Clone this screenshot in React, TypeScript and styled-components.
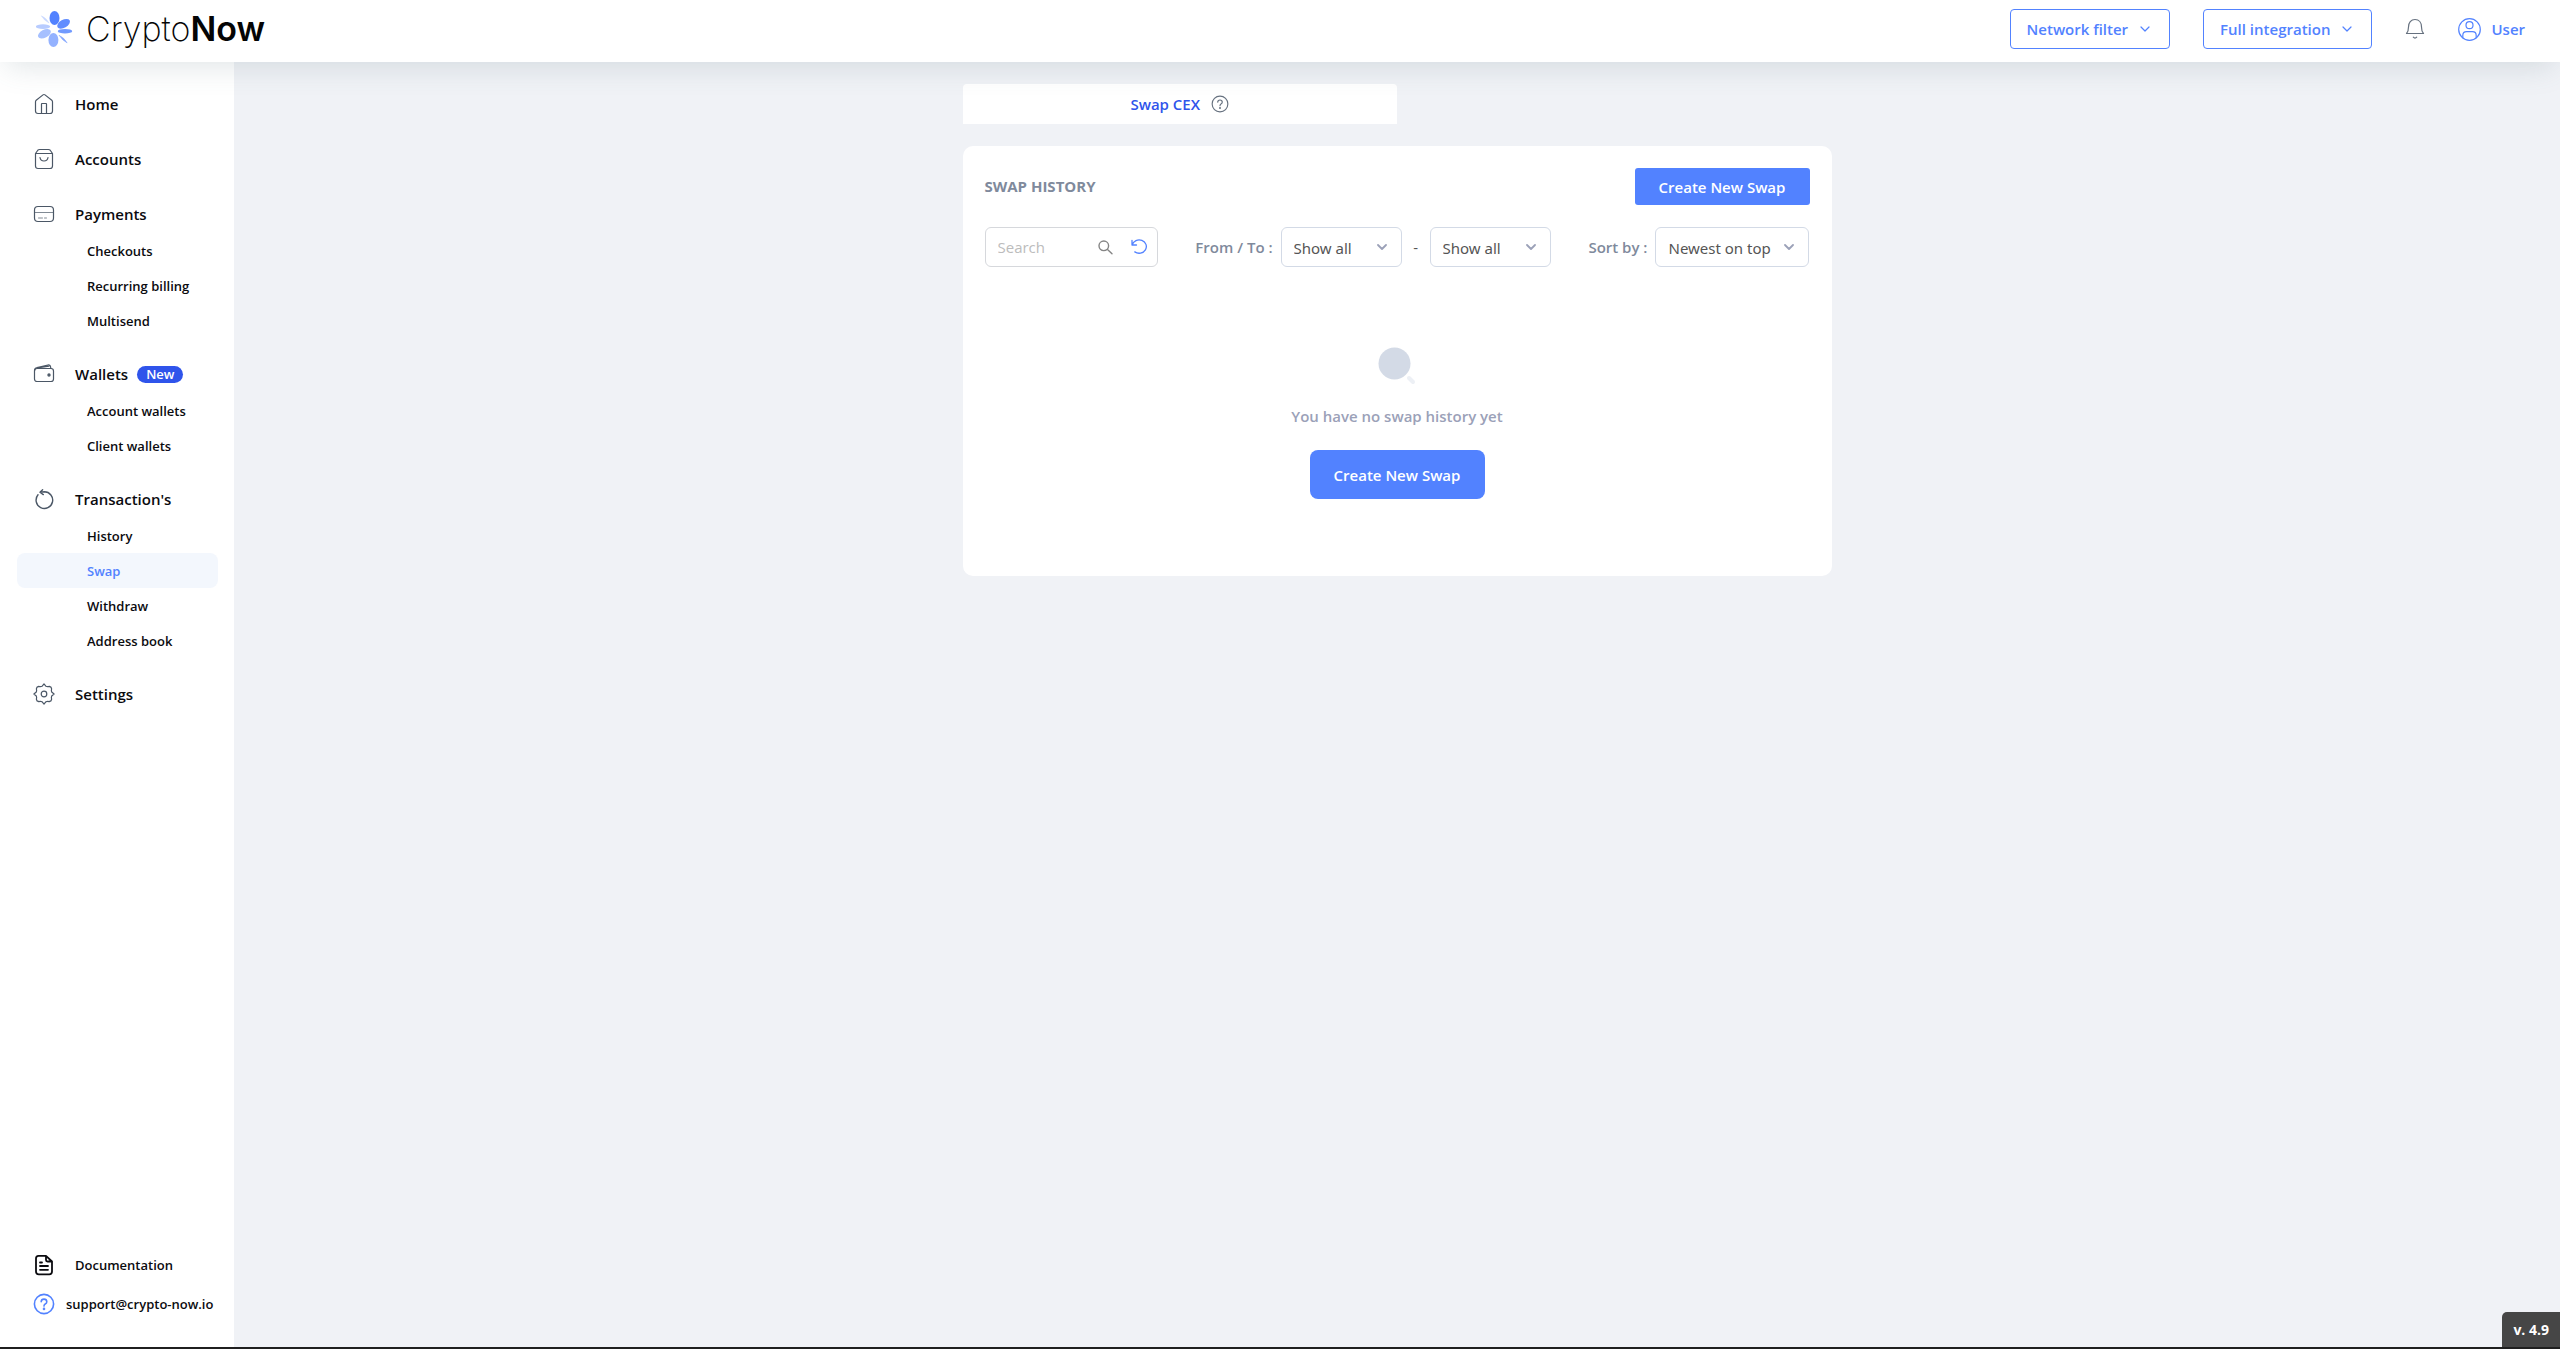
import React from 'react';
import styled, { createGlobalStyle } from 'styled-components';

const GlobalStyle = createGlobalStyle`
  *, *::before, *::after { box-sizing: border-box; }
  body { margin: 0; background: #f0f2f6; font-family: "Open Sans", "Noto Sans", sans-serif; font-size: 15px; color: #0b0b0f; }
  button, input, select { font: inherit; }
  button { cursor: pointer; }
  svg { display: block; flex: none; }
  ul { list-style: none; margin: 0; padding: 0; }
`;

const Page = styled.div`
  display: flex;
  flex-direction: column;
  min-height: 100vh;
  border-bottom: 2px solid #1f1f1f;
`;

const Header = styled.header`
  position: relative;
  z-index: 2;
  display: flex;
  align-items: center;
  justify-content: space-between;
  height: 62px;
  padding: 0 35px 4px 36px;
  background: #fff;
  box-shadow: 0 10px 30px -6px rgba(80, 105, 115, 0.18);
`;

const Brand = styled.a`
  display: flex;
  align-items: center;
  gap: 13px;
  color: #050505;
  text-decoration: none;
  font-family: Inter, Lato, sans-serif;
  font-size: 34px;
  line-height: 40px;
  font-weight: 200;
  b { font-weight: 600; }
`;

const HeaderActions = styled.div`
  display: flex;
  align-items: center;
`;

const OutlineButton = styled.button`
  display: flex;
  align-items: center;
  gap: 12px;
  height: 40px;
  margin-right: 33px;
  padding: 0 19px 0 16px;
  border: 1px solid #5282ff;
  border-radius: 4px;
  background: #fff;
  color: #5282ff;
  font-weight: 600;
`;

const IconButton = styled.button`
  display: flex;
  margin-right: 33px;
  padding: 0;
  border: 0;
  background: none;
`;

const UserButton = styled.button`
  display: flex;
  align-items: center;
  gap: 10px;
  padding: 0;
  border: 0;
  background: none;
  color: #5282ff;
  font-weight: 600;
`;

const Body = styled.div`
  display: flex;
  flex: 1;
`;

const Sidebar = styled.aside`
  display: flex;
  flex-direction: column;
  justify-content: space-between;
  width: 234px;
  padding: 23px 16px 24px 17px;
  background: #fff;
  font-weight: 600;
`;

const NavList = styled.ul`
  display: flex;
  flex-direction: column;
  gap: 17px;
`;

const NavLink = styled.a`
  display: flex;
  align-items: center;
  gap: 20px;
  height: 38px;
  padding-left: 16px;
  color: inherit;
  text-decoration: none;
`;

const NavLabel = styled.span`
  display: flex;
  align-items: center;
  gap: 9px;
`;

const SubLink = styled.a<{ $active?: boolean }>`
  display: flex;
  align-items: center;
  height: 35px;
  padding-left: 70px;
  border-radius: 8px;
  font-size: 13px;
  text-decoration: none;
  color: ${(p) => (p.$active ? '#5282ff' : 'inherit')};
  background: ${(p) => (p.$active ? '#f3f7fd' : 'transparent')};
`;

const Pill = styled.span`
  padding: 0 9px;
  border-radius: 9px;
  background: #2f54eb;
  color: #fff;
  font-size: 13px;
  line-height: 17px;
`;

const HelpLink = styled.a<{ $gap: number }>`
  display: flex;
  align-items: center;
  gap: ${(p) => p.$gap}px;
  height: 39px;
  padding-left: 16px;
  color: inherit;
  font-size: 13px;
  text-decoration: none;
`;

const Main = styled.main`
  display: flex;
  flex-direction: column;
  align-items: center;
  flex: 1;
  padding: 22px;
`;

const Content = styled.div`
  width: 100%;
  max-width: 869px;
`;

const Tab = styled.div`
  display: flex;
  align-items: center;
  justify-content: center;
  gap: 11px;
  width: 50%;
  height: 40px;
  margin-bottom: 22px;
  border-radius: 4px 4px 0 0;
  background: #fff;
`;

const TabButton = styled.button`
  padding: 0;
  border: 0;
  background: none;
  color: #2f54eb;
  font-weight: 600;
`;

const HelpButton = styled.button`
  padding: 0;
  border: 0;
  background: none;
`;

const Card = styled.section`
  padding: 22px 22px 77px;
  border-radius: 10px;
  background: #fff;
`;

const CardHead = styled.div`
  display: flex;
  align-items: center;
  justify-content: space-between;
`;

const Title = styled.h1`
  margin: 0;
  padding-bottom: 2px;
  color: #7f8a9c;
  font-size: 15px;
  font-weight: 700;
`;

const PrimaryButton = styled.button<{ $large?: boolean }>`
  width: 175px;
  height: ${(p) => (p.$large ? 49 : 37)}px;
  padding: 0;
  border: 0;
  border-radius: ${(p) => (p.$large ? 8 : 3)}px;
  background: #5282ff;
  color: #fff;
  font-weight: 600;
`;

const Filters = styled.div`
  display: flex;
  align-items: center;
  justify-content: space-between;
  margin-top: 22px;
`;

const SearchBox = styled.div`
  display: flex;
  align-items: center;
  width: 173px;
  height: 40px;
  padding: 0 8px 0 12px;
  border: 1px solid #d6d8dc;
  border-radius: 6px;
`;

const SearchInput = styled.input`
  flex: 1;
  min-width: 0;
  padding: 0;
  border: 0;
  outline: 0;
  color: #555;
  &::placeholder { color: #bcbcbc; opacity: 1; }
`;

const ToolButton = styled.button`
  margin-left: 18px;
  padding: 0;
  border: 0;
  background: none;
`;

const FilterGroup = styled.div`
  display: flex;
  align-items: center;
`;

const FilterLabel = styled.label`
  margin-right: 8px;
  color: #7f8a9c;
  font-weight: 600;
`;

const Dash = styled.span`
  width: 28px;
  text-align: center;
  color: #555;
`;

const SelectWrap = styled.span<{ $width: number }>`
  display: grid;
  align-items: center;
  width: ${(p) => p.$width}px;
  height: 40px;
  > * { grid-area: 1 / 1; }
  > svg { justify-self: end; margin-right: 15px; pointer-events: none; }
`;

const Select = styled.select`
  width: 100%;
  height: 40px;
  padding: 2px 28px 0 12px;
  border: 1px solid #d3dae6;
  border-radius: 6px;
  background: #fff;
  color: #555;
  font-family: "Noto Sans", "Open Sans", sans-serif;
  appearance: none;
`;

const Empty = styled.div`
  display: flex;
  flex-direction: column;
  align-items: center;
  padding-top: 80px;
`;

const EmptyText = styled.p`
  margin: 19px 0 22px;
  color: #9ba1b8;
  font-weight: 600;
  line-height: 24px;
`;

const Version = styled.div`
  position: fixed;
  right: 0;
  bottom: 2px;
  padding: 0 11px;
  border-radius: 5px 0 0 0;
  background: #464646;
  color: #fff;
  font-size: 14px;
  font-weight: 700;
  line-height: 35px;
`;

const stroke = { fill: 'none', strokeLinecap: 'round', strokeLinejoin: 'round' } as const;

const LogoMark = () => (
  <svg width="37" height="37" viewBox="0 0 37 37" aria-hidden="true">
    <ellipse cx="18.5" cy="7" rx="5" ry="7" fill="#5282ff" />
    <ellipse cx="27.6" cy="12.8" rx="7" ry="4" fill="#618dff" transform="rotate(-30 27.6 12.8)" />
    <ellipse cx="29" cy="20.2" rx="7.2" ry="2.3" fill="#719aff" />
    <path d="M23 24.2Q28.5 27 31.2 32Q26 29 23 24.2Z" fill="#86a8ff" stroke="#86a8ff" strokeWidth=".5" />
    <ellipse cx="17.4" cy="29" rx="5" ry="7" fill="#94b2ff" />
    <ellipse cx="8.4" cy="22.8" rx="7" ry="4" fill="#a6c0ff" transform="rotate(-28 8.4 22.8)" />
    <ellipse cx="7" cy="15.6" rx="7.2" ry="2.3" fill="#b8ccff" />
    <path d="M5.3 4.8Q10.5 7 13 12Q8 9.5 5.3 4.8Z" fill="#c9d8ff" stroke="#c9d8ff" strokeWidth=".5" />
  </svg>
);

const Chevron = ({ color, width = 1.2 }: { color: string; width?: number }) => (
  <svg width="10" height="6" viewBox="0 0 10 6" aria-hidden="true" {...stroke} stroke={color} strokeWidth={width}>
    <path d="M1 1 5 5 9 1" />
  </svg>
);

const NavIcon = ({ children, color = '#4b5766', width = 1.2 }: { children: React.ReactNode; color?: string; width?: number }) => (
  <svg width="22" height="22" viewBox="0 0 22 22" aria-hidden="true" {...stroke} stroke={color} strokeWidth={width}>
    {children}
  </svg>
);

const HomeIcon = () => (
  <NavIcon>
    <path d="M2.5 8.7Q2.5 7.8 3.2 7.2L10 1.9Q11 1.1 12 1.9L18.8 7.2Q19.5 7.8 19.5 8.7V18Q19.5 20.5 17 20.5H5Q2.5 20.5 2.5 18Z" />
    <path d="M8.5 20.5V11Q8.5 10.5 9 10.5H13Q13.5 10.5 13.5 11V20.5" />
  </NavIcon>
);

const BagIcon = () => (
  <NavIcon>
    <path d="M2.5 5.5 5 2Q5.5 1.5 6.5 1.5H15.5Q16.5 1.5 17 2L19.5 5.5V18Q19.5 20.5 17 20.5H5Q2.5 20.5 2.5 18ZM2.5 5.5H19.5" />
    <path d="M7 9.5Q7.5 13 11 13T15 9.5" />
  </NavIcon>
);

const CardIcon = () => (
  <NavIcon>
    <rect x="1.5" y="3.5" width="19" height="15" rx="3.5" />
    <path d="M1.5 9.5H20.5M5.5 15H9.5M11.5 15H13.5" strokeWidth=".7" />
  </NavIcon>
);

const WalletIcon = () => (
  <NavIcon>
    <rect x="1.5" y="5.5" width="19" height="13" rx="2.5" />
    <path d="M1.5 7.8Q1.5 5 4 4.5L15 2Q17.2 1.6 17.5 3.5L17.8 5.3M4.5 5 16 3.2" />
    <circle cx="16" cy="12" r="1.1" fill="#4b5766" />
  </NavIcon>
);

const CycleIcon = () => (
  <NavIcon width={1.4}>
    <path d="M5 6.8A8.3 8.3 0 1 0 11.4 3.8L7 4.2M9.6 1.7 7 4.2 10.3 6.6" />
  </NavIcon>
);

const GearIcon = () => (
  <NavIcon>
    <path d="M11 .9 13 3.3Q14.3 3.9 16.2 3.4L17.9 4.1 18.6 5.8Q18.1 7.7 18.7 9L21.1 11 18.7 13Q18.1 14.3 18.6 16.2L17.9 17.9 16.2 18.6Q14.3 18.1 13 18.7L11 21.1 9 18.7Q7.7 18.1 5.8 18.6L4.1 17.9 3.4 16.2Q3.9 14.3 3.3 13L.9 11 3.3 9Q3.9 7.7 3.4 5.8L4.1 4.1 5.8 3.4Q7.7 3.9 9 3.3Z" />
    <circle cx="11" cy="11" r="2.8" />
  </NavIcon>
);

const DocIcon = () => (
  <NavIcon color="#0b0b0f" width={1.8}>
    <path d="M5.5 1.8H13L19 7.5V17.5Q19 20.3 16.2 20.3H5.8Q3 20.3 3 17.5V4.5Q3 1.8 5.5 1.8ZM13 2V6Q13 7.5 14.5 7.5H18.5M7 8.5H9M7 12H15M7 15.8H15" />
  </NavIcon>
);

const QuestionIcon = ({ size, color, width }: { size: number; color: string; width: number }) => (
  <svg width={size} height={size} viewBox="0 0 22 22" aria-hidden="true" {...stroke} stroke={color} strokeWidth={width}>
    <circle cx="11" cy="11" r="9.6" />
    <path d="M8.2 8.7Q8.3 6.1 11 6.1T13.8 8.7Q13.8 10.2 12.2 11 11 11.7 11 13.1" />
    <circle cx="11" cy="15.9" r=".5" fill={color} />
  </svg>
);

const NAV = [
  { label: 'Home', icon: <HomeIcon />, items: [] },
  { label: 'Accounts', icon: <BagIcon />, items: [] },
  { label: 'Payments', icon: <CardIcon />, items: ['Checkouts', 'Recurring billing', 'Multisend'] },
  { label: 'Wallets', icon: <WalletIcon />, badge: 'New', items: ['Account wallets', 'Client wallets'] },
  { label: "Transaction's", icon: <CycleIcon />, items: ['History', 'Swap', 'Withdraw', 'Address book'] },
  { label: 'Settings', icon: <GearIcon />, items: [] },
];

const Dropdown = ({ id, width, option, label }: { id: string; width: number; option: string; label?: string }) => (
  <SelectWrap $width={width}>
    <Select id={id} aria-label={label}>
      <option>{option}</option>
    </Select>
    <Chevron color="#9ba1b8" width={1.8} />
  </SelectWrap>
);

export default function App() {
  return (
    <>
      <GlobalStyle />
      <Page>
        <Header>
          <Brand href="#">
            <LogoMark />
            <span>Crypto<b>Now</b></span>
          </Brand>
          <HeaderActions>
            <OutlineButton>Network filter <Chevron color="#5282ff" /></OutlineButton>
            <OutlineButton>Full integration <Chevron color="#5282ff" /></OutlineButton>
            <IconButton aria-label="Notifications">
              <svg width="20" height="22" viewBox="0 0 20 22" {...stroke} stroke="#66717f" strokeWidth="1.2">
                <path d="M1.5 15.5Q3.5 13.5 3.5 9C3.5 4.5 6 1.5 10 1.5S16.5 4.5 16.5 9Q16.5 13.5 18.5 15.5ZM8.3 19.2Q10 21 11.7 19.2" />
              </svg>
            </IconButton>
            <UserButton>
              <svg width="23" height="23" viewBox="0 0 23 23" aria-hidden="true" {...stroke} stroke="#5282ff" strokeWidth="1.2">
                <circle cx="11.5" cy="11.5" r="10.8" />
                <circle cx="11.5" cy="7.2" r="3.5" />
                <path d="M4.8 19.8V17.5Q4.8 13.7 8.6 13.7H14.4Q18.2 13.7 18.2 17.5V19.8" />
              </svg>
              User
            </UserButton>
          </HeaderActions>
        </Header>
        <Body>
          <Sidebar>
            <nav>
              <NavList>
                {NAV.map((group) => (
                  <li key={group.label}>
                    <NavLink href="#">
                      {group.icon}
                      <NavLabel>{group.label}{group.badge && <Pill>{group.badge}</Pill>}</NavLabel>
                    </NavLink>
                    {group.items.length > 0 && (
                      <ul>
                        {group.items.map((item) => (
                          <li key={item}><SubLink href="#" $active={item === 'Swap'}>{item}</SubLink></li>
                        ))}
                      </ul>
                    )}
                  </li>
                ))}
              </NavList>
            </nav>
            <div>
              <HelpLink href="#" $gap={20}><DocIcon />Documentation</HelpLink>
              <HelpLink href="mailto:support@crypto-now.io" $gap={11}>
                <QuestionIcon size={22} color="#5282ff" width={1.6} />support@crypto-now.io
              </HelpLink>
            </div>
          </Sidebar>
          <Main>
            <Content>
              <Tab>
                <TabButton>Swap CEX</TabButton>
                <HelpButton aria-label="About Swap CEX"><QuestionIcon size={18} color="#66717f" width={1.4} /></HelpButton>
              </Tab>
              <Card>
                <CardHead>
                  <Title>SWAP HISTORY</Title>
                  <PrimaryButton>Create New Swap</PrimaryButton>
                </CardHead>
                <Filters>
                  <SearchBox>
                    <SearchInput placeholder="Search" aria-label="Search" />
                    <ToolButton aria-label="Find">
                      <svg width="15" height="15" viewBox="0 0 15 15" {...stroke} stroke="#858585" strokeWidth="1.4">
                        <circle cx="5.8" cy="5.8" r="4.8" /><path d="m9.5 9.5 4.5 4.3" />
                      </svg>
                    </ToolButton>
                    <ToolButton aria-label="Reset">
                      <svg width="18" height="16" viewBox="0 0 18 16" {...stroke} stroke="#5282ff" strokeWidth="1.3">
                        <path d="M1 1.3V6H5.5M1.2 5.8A7.2 6.7 0 1 1 3.8 12.9" />
                      </svg>
                    </ToolButton>
                  </SearchBox>
                  <FilterGroup>
                    <FilterLabel htmlFor="from">From / To :</FilterLabel>
                    <Dropdown id="from" width={121} option="Show all" />
                    <Dash>-</Dash>
                    <Dropdown id="to" width={121} option="Show all" label="To" />
                  </FilterGroup>
                  <FilterGroup>
                    <FilterLabel htmlFor="sort">Sort by :</FilterLabel>
                    <Dropdown id="sort" width={154} option="Newest on top" />
                  </FilterGroup>
                </Filters>
                <Empty>
                  <svg width="38" height="38" viewBox="0 0 38 38" aria-hidden="true">
                    <circle cx="16.5" cy="16.5" r="16" fill="#d3dae6" />
                    <path d="m31 31 4 4" stroke="#edf0f5" strokeWidth="4" strokeLinecap="round" />
                  </svg>
                  <EmptyText>You have no swap history yet</EmptyText>
                  <PrimaryButton $large>Create New Swap</PrimaryButton>
                </Empty>
              </Card>
            </Content>
          </Main>
        </Body>
        <Version>v. 4.9</Version>
      </Page>
    </>
  );
}
